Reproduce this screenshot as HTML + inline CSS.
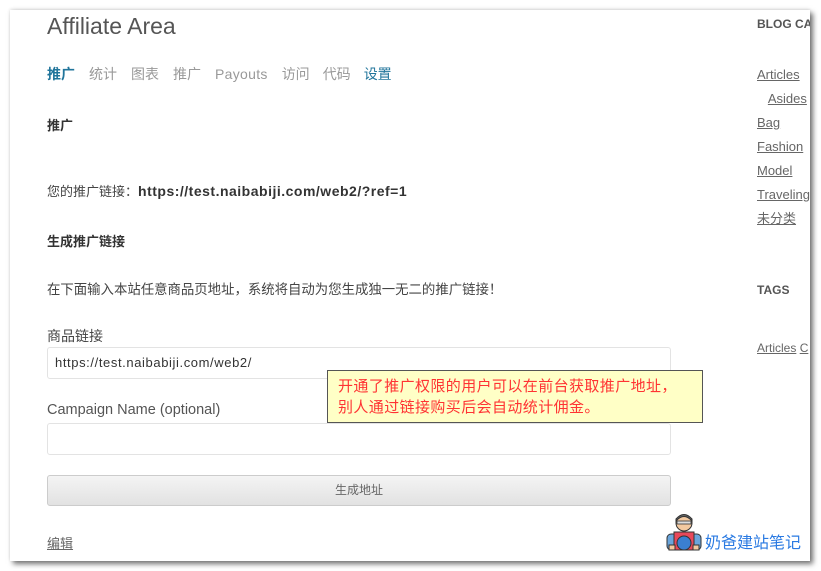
<!DOCTYPE html>
<html><head><meta charset="utf-8"><style>
body{margin:0;width:821px;height:571px;background:#fff;position:relative;overflow:hidden;font-family:"Liberation Sans","Noto Sans CJK SC",sans-serif;color:#444}
.page{position:absolute;left:10px;top:10px;width:800px;height:551px;background:#fff;box-shadow:3px 3px 5px rgba(0,0,0,.55),0 -1px 3px rgba(0,0,0,.12);overflow:hidden}
.a{position:absolute;white-space:nowrap}
.in{position:absolute;left:37px;width:622px;height:30px;border:1px solid #e3e3e3;border-radius:3px;background:#fff}
.sb a{color:#666;text-decoration:underline}
</style></head><body>
<div class="page">
<div class="a" style="left:37px;top:3px;font-size:23px;color:#555">Affiliate Area</div>
<div class="a" style="left:37px;top:54px;font-size:14px;color:#999">
<span style="color:#21759b;font-weight:bold">推广</span><span style="margin-left:14px">统计</span><span style="margin-left:14px">图表</span><span style="margin-left:14px">推广</span><span style="margin-left:14px;letter-spacing:.3px">Payouts</span><span style="margin-left:14px">访问</span><span style="margin-left:13px">代码</span><span style="margin-left:13px;color:#21759b">设置</span></div>
<div class="a" style="left:37px;top:105px;font-size:13px;font-weight:bold;color:#333">推广</div>
<div class="a" style="left:37px;top:171px;font-size:13px;color:#444">您的推广链接：<b style="color:#333;font-size:14px;letter-spacing:.5px">https://test.naibabiji.com/web2/?ref=1</b></div>
<div class="a" style="left:37px;top:221px;font-size:13px;font-weight:bold;color:#333">生成推广链接</div>
<div class="a" style="left:37px;top:268px;font-size:13.4px;color:#444">在下面输入本站任意商品页地址，系统将自动为您生成独一无二的推广链接！</div>
<div class="a" style="left:37px;top:316px;font-size:14px;color:#444">商品链接</div>
<div class="in" style="top:337px"><span class="a" style="left:7px;top:7px;font-size:13px;letter-spacing:.6px;color:#333">https://test.naibabiji.com/web2/</span></div>
<div class="a" style="left:37px;top:392px;font-size:14.5px;color:#555">Campaign Name (optional)</div>
<div class="in" style="top:413px"></div>
<div class="a" style="left:37px;top:465px;width:622px;height:29px;border:1px solid #ccc;border-radius:3px;background:linear-gradient(#f4f4f4,#e2e2e2);text-align:center;line-height:29px;font-size:12px;color:#666">生成地址</div>
<div class="a" style="left:37px;top:523px;font-size:13px;color:#666;text-decoration:underline">编辑</div>
<div class="a" style="left:317px;top:360px;width:376px;height:53px;background:#ffffc6;border:1px solid #555;color:#f33;font-size:15px;letter-spacing:.4px;line-height:21px;padding:5px 0 0 10px;box-sizing:border-box">开通了推广权限的用户可以在前台获取推广地址，<br>别人通过链接购买后会自动统计佣金。</div>
<div class="sb">
<div class="a" style="left:747px;top:7px;font-size:12px;font-weight:bold;color:#555">BLOG CA</div>
<div class="a" style="left:747px;top:53px;font-size:13px;line-height:24px"><a>Articles</a><br>&nbsp;&nbsp;&nbsp;<a>Asides</a><br><a>Bag</a><br><a>Fashion</a><br><a>Model</a><br><a>Traveling</a><br><a>未分类</a></div>
<div class="a" style="left:747px;top:273px;font-size:12px;font-weight:bold;color:#555">TAGS</div>
<div class="a" style="left:747px;top:331px;font-size:12px"><a>Articles</a> <a>C</a></div>
</div>
<svg class="a" style="left:654px;top:502px" width="40" height="40" viewBox="0 0 40 40">
<rect x="3" y="22" width="34" height="16" rx="4" fill="#6aa5dc" stroke="#333"/>
<rect x="10" y="20" width="20" height="18" fill="#e8485a" stroke="#333"/>
<circle cx="20" cy="31" r="7" fill="#3b7fd1" stroke="#333"/>
<circle cx="20" cy="11" r="8" fill="#f3c9a0" stroke="#333"/>
<path d="M12 9 Q20 0 28 9 L28 7 Q20 -2 12 7Z" fill="#666" stroke="#333"/>
<rect x="13" y="9" width="14" height="3" fill="#ddd" stroke="#333" stroke-width=".8"/>
<rect x="5" y="33" width="6" height="5" fill="#f3c9a0" stroke="#333"/><rect x="29" y="33" width="6" height="5" fill="#f3c9a0" stroke="#333"/>
</svg>
<div class="a" style="left:695px;top:519px;font-size:16px;color:#2a7ae2">奶爸建站笔记</div>
</div>
</body></html>
